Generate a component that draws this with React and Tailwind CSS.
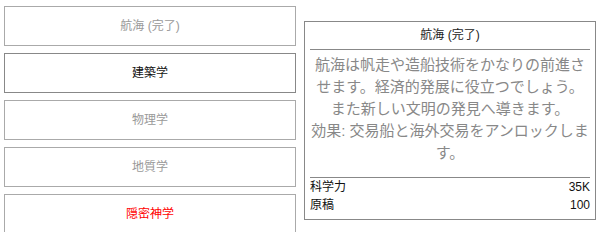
const techs = [
  { name: "航海 (完了)", tone: "done" },
  { name: "建築学", tone: "active" },
  { name: "物理学", tone: "locked" },
  { name: "地質学", tone: "locked" },
  { name: "隠密神学", tone: "secret" },
];

const toneClass = {
  done: "border-[#aaaaaa] text-[#999999]",
  active: "border-[#888888] text-[#111111]",
  locked: "border-[#aaaaaa] text-[#999999]",
  secret: "border-[#aaaaaa] text-[#ff0000]",
};

const costs = [
  ["科学力", "35K"],
  ["原稿", "100"],
];

export default function App() {
  return (
    <div
      className="flex h-[232px] w-[616px] items-start gap-2 overflow-hidden bg-white pl-1 pt-[6px]"
      style={{ fontFamily: '"Liberation Sans", "Noto Sans CJK JP", sans-serif' }}
    >
      {/* TECH LIST */}
      <div className="flex w-[292px] shrink-0 flex-col gap-[7px]">
        {techs.map((t) => (
          <button
            key={t.name}
            className={`flex h-10 w-full items-center justify-center border bg-white text-[12px] ${toneClass[t.tone]}`}
          >
            {t.name}
          </button>
        ))}
      </div>

      {/* TOOLTIP */}
      <div className="mt-[15px] w-[292px] shrink-0 border border-[#888888] bg-white px-[5px] pb-[5px]">
        <div className="border-b border-[#888888] pb-[6px] pt-[6px] text-center text-[12px] leading-[15px] text-[#222222]">
          航海 (完了)
        </div>
        <p className="pb-[13px] pt-[4px] text-center text-[15px] leading-[22px] text-[#888888]">
          航海は帆走や造船技術をかなりの前進させます。経済的発展に役立つでしょう。また新しい文明の発見へ導きます。
          <br />
          効果: 交易船と海外交易をアンロックします。
        </p>
        <div className="border-t border-[#888888] text-[12px] leading-[18px] text-[#111111]">
          {costs.map(([label, value]) => (
            <div key={label} className="flex justify-between">
              <span>{label}</span>
              <span>{value}</span>
            </div>
          ))}
        </div>
      </div>
    </div>
  );
}
